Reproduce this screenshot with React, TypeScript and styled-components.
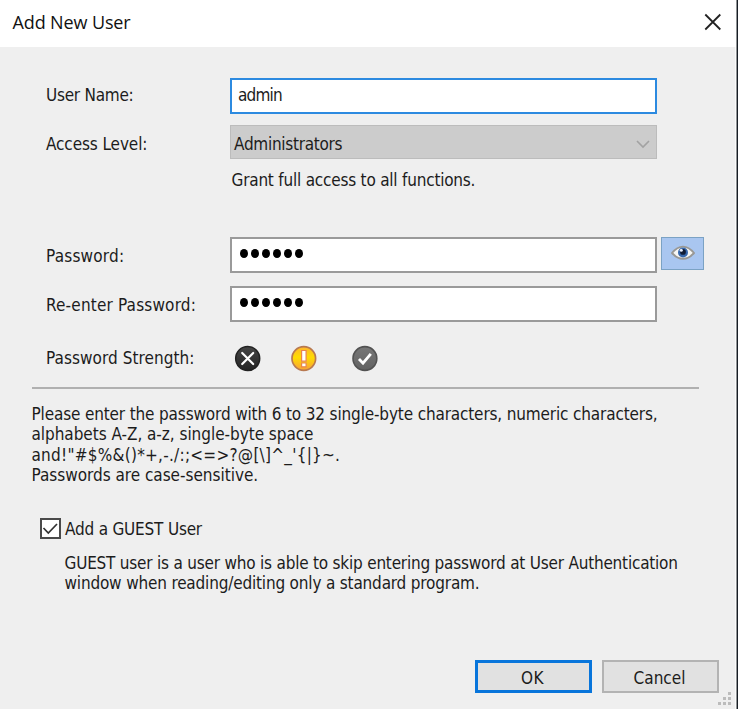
import React from 'react';
import styled, { createGlobalStyle } from 'styled-components';

const GlobalStyle = createGlobalStyle`
  * { box-sizing: border-box; }
  body { margin: 0; background: #efefef; }
`;

const Dialog = styled.div`
  width: 738px;
  height: 709px;
  display: flex;
  flex-direction: column;
  overflow: hidden;
  background: #efefef;
  border-right: 1px solid #171d24;
  box-shadow: inset -1px 0 0 #8f9294, inset -2px 0 0 #fafafa;
  color: #1c1c1c;
  font: 17px/20px "DejaVu Sans Condensed", "DejaVu Sans", sans-serif;
`;

const TitleBar = styled.header`
  height: 47px;
  flex: none;
  margin-right: 1px;
  display: flex;
  align-items: center;
  justify-content: space-between;
  padding: 0 14px 3px 12.5px;
  background: #fff;
`;

const Title = styled.h1`
  margin: 0;
  font: 400 18px/24px "Open Sans", sans-serif;
  letter-spacing: -0.12px;
  color: #111;
`;

const CloseButton = styled.button`
  display: flex;
  border: 0;
  padding: 0;
  background: none;
`;

const Text = styled.span<{ $track?: number }>`
  white-space: pre;
  letter-spacing: ${p => p.$track ?? 0}px;
`;

const Form = styled.main`
  display: flex;
  flex-direction: column;
  padding-top: 31px;
`;

const Row = styled.div<{ $height: number; $gap?: number }>`
  display: grid;
  grid-template-columns: 184px 427px auto;
  align-items: start;
  height: ${p => p.$height}px;
  margin: 0 0 ${p => p.$gap ?? 0}px 46px;
`;

const Label = styled.label<{ $top: number; $track: number }>`
  padding-top: ${p => p.$top}px;
  letter-spacing: ${p => p.$track}px;
  white-space: nowrap;
`;

const Field = styled.div<{ $focused?: boolean }>`
  height: 36px;
  display: flex;
  align-items: flex-start;
  padding: 5px 0 0 6px;
  background: #fff;
  border: 2px solid ${p => (p.$focused ? '#2c8ae0' : '#9a9a9a')};
`;

const Select = styled.div`
  height: 34px;
  display: flex;
  justify-content: space-between;
  align-items: center;
  padding: 3px 5px 0 3px;
  background: #ccc;
  border: 1px solid #bcbcbc;
`;

const Dots = styled.div`
  display: flex;
  gap: 3px;
  padding: 5px 0 0 2px;
`;

const Dot = styled.i`
  width: 8px;
  height: 9px;
  border-radius: 50%;
  background: #000;
`;

const EyeButton = styled.button`
  width: 43px;
  height: 33px;
  margin-left: 4px;
  padding: 0 0 1px;
  display: flex;
  align-items: center;
  justify-content: center;
  background: #a9c6f0;
  border: 1px solid #7ba2c4;
`;

const Hint = styled.div`
  height: 20px;
  margin: 11px 0 47px 231.5px;
  display: flex;
`;

const StrengthIcons = styled.div`
  display: grid;
  grid-template-columns: 56.5px 61px 28px;
  padding: 23px 0 0 3.5px;
`;

const Divider = styled.hr`
  width: 667px;
  height: 2px;
  margin: 0 0 0 32px;
  border: 0;
  background: #b0b0b0;
`;

const Rules = styled.div`
  display: flex;
  flex-direction: column;
  margin: 15px 0 0 31.5px;
  line-height: 20.4px;
`;

const CheckRow = styled.label`
  display: flex;
  align-items: center;
  gap: 4px;
  height: 22px;
  margin: 32px 0 0 40px;
`;

const CheckBox = styled.span`
  width: 21px;
  height: 21px;
  display: flex;
  background: #fff;
  border: 2px solid #4a4a4a;
`;

const GuestNote = styled.div`
  display: flex;
  flex-direction: column;
  margin: 13px 0 0 64.5px;
`;

const Footer = styled.footer`
  display: flex;
  justify-content: flex-end;
  align-items: flex-start;
  gap: 10px;
  margin-top: auto;
  height: 49px;
`;

const Button = styled.button<{ $primary?: boolean }>`
  width: 117px;
  height: 33px;
  padding: 3px 2px 0 0;
  display: flex;
  align-items: center;
  justify-content: center;
  color: inherit;
  font: inherit;
  background: #e1e1e1;
  border: ${p => (p.$primary ? '3px solid #0875db' : '2px solid #b3b3b3')};
`;

const Grip = styled.div`
  align-self: flex-end;
  width: 20px;
  height: 18px;
  margin-left: -12px;
`;

const PasswordDots = () => (
  <Dots>{[0, 1, 2, 3, 4, 5].map(i => <Dot key={i} />)}</Dots>
);

const EyeIcon = () => (
  <svg width="24" height="16" viewBox="0 0 24 16">
    <path d="M1 8C5 3 8 1.6 12 1.6S19 3 23 8C19 12.5 16 13.8 12 13.8S5 12.5 1 8Z" fill="#f7f7f5" stroke="#999895" strokeWidth="1.9" />
    <circle cx="12" cy="7.5" r="5" fill="#3768ad" />
    <circle cx="12" cy="6.9" r="2.9" fill="#111c35" />
    <circle cx="10.3" cy="5.2" r="1.5" fill="#e8f0ff" />
  </svg>
);

const WeakIcon = () => (
  <svg width="27" height="27" viewBox="0 0 27 27">
    <defs>
      <linearGradient id="weak" x2="0" y2="1"><stop stopColor="#454545" /><stop offset="1" stopColor="#242424" /></linearGradient>
    </defs>
    <circle cx="13.7" cy="13.5" r="12" fill="url(#weak)" stroke="#222" strokeWidth="1.5" />
    <path d="M8.2 8 19.2 19M19.2 8 8.2 19" stroke="#fff" strokeWidth="2.2" strokeLinecap="round" />
  </svg>
);

const MediumIcon = () => (
  <svg width="27" height="27" viewBox="0 0 27 27">
    <defs>
      <linearGradient id="medium" x2="0" y2="1"><stop stopColor="#ffb52e" /><stop offset=".45" stopColor="#ffdc00" /><stop offset="1" stopColor="#f9a03a" /></linearGradient>
    </defs>
    <circle cx="13.8" cy="13.5" r="11.8" fill="url(#medium)" stroke="#b87950" strokeWidth="1.7" />
    <path d="M11.6 5.5h4.5v10.7h-4.5zM11.6 18h4.5v3.8h-4.5z" fill="#fff" stroke="#e9864f" strokeWidth="1.2" />
  </svg>
);

const StrongIcon = () => (
  <svg width="27" height="27" viewBox="0 0 27 27">
    <defs>
      <linearGradient id="strong" x2="0" y2="1"><stop stopColor="#777" /><stop offset="1" stopColor="#626262" /></linearGradient>
    </defs>
    <circle cx="13.9" cy="13.5" r="11.9" fill="url(#strong)" stroke="#525252" strokeWidth="1.6" />
    <path d="m8 14 4 4.2 7.8-9.4" fill="none" stroke="#fff" strokeWidth="2.8" />
  </svg>
);

export default function App() {
  return (
    <>
      <GlobalStyle />
      <Dialog>
        <TitleBar>
          <Title>Add New User</Title>
          <CloseButton aria-label="Close">
            <svg width="18" height="18" viewBox="0 0 18 18">
              <path d="M1.3 1.5 16.3 16.5M16.3 1.5 1.3 16.5" stroke="#222" strokeWidth="1.8" />
            </svg>
          </CloseButton>
        </TitleBar>
        <Form>
          <Row $height={36} $gap={11}>
            <Label $top={7} $track={-0.25}>User Name:</Label>
            <Field $focused><Text $track={-0.8}>admin</Text></Field>
          </Row>
          <Row $height={34}>
            <Label $top={9} $track={-0.1}>Access Level:</Label>
            <Select>
              <Text $track={-0.28}>Administrators</Text>
              <svg width="16" height="12" viewBox="0 0 16 12">
                <path d="m2 3 6 6 6-6" fill="none" stroke="#a2a2a2" strokeWidth="1.6" />
              </svg>
            </Select>
          </Row>
          <Hint><Text $track={-0.21}>Grant full access to all functions.</Text></Hint>
          <Row $height={36} $gap={13}>
            <Label $top={9} $track={0.2}>Password:</Label>
            <Field><PasswordDots /></Field>
            <EyeButton aria-label="Show password"><EyeIcon /></EyeButton>
          </Row>
          <Row $height={36}>
            <Label $top={9} $track={0.17}>Re-enter Password:</Label>
            <Field><PasswordDots /></Field>
          </Row>
          <Row $height={65}>
            <Label $top={26} $track={0.06}>Password Strength:</Label>
            <StrengthIcons>
              <WeakIcon />
              <MediumIcon />
              <StrongIcon />
            </StrengthIcons>
          </Row>
          <Divider />
          <Rules>
            <Text $track={-0.15}>Please enter the password with 6 to 32 single-byte characters, numeric characters,</Text>
            <Text $track={-0.04}>alphabets A-Z, a-z, single-byte space</Text>
            <Text $track={0.25}>{'and!"#$%&()*+,-./:;<=>?@[\\]^_\'{|}~.'}</Text>
            <Text $track={-0.02}>Passwords are case-sensitive.</Text>
          </Rules>
          <CheckRow>
            <CheckBox>
              <svg width="17" height="17" viewBox="0 0 17 17">
                <path d="m1.5 8 4.8 5L15 4" fill="none" stroke="#333" strokeWidth="1.7" />
              </svg>
            </CheckBox>
            <Text $track={-0.2}>Add a GUEST User</Text>
          </CheckRow>
          <GuestNote>
            <Text $track={-0.21}>GUEST user is a user who is able to skip entering password at User Authentication</Text>
            <Text $track={-0.18}>window when reading/editing only a standard program.</Text>
          </GuestNote>
        </Form>
        <Footer>
          <Button $primary><Text $track={0.4}>OK</Text></Button>
          <Button><Text>Cancel</Text></Button>
          <Grip>
            <svg width="16" height="16" viewBox="0 0 16 16" fill="#bcbcbc">
              <path d="M11 1h3v3h-3zM6 6h3v3H6zM11 6h3v3h-3zM1 11h3v3H1zM6 11h3v3H6zM11 11h3v3h-3z" />
            </svg>
          </Grip>
        </Footer>
      </Dialog>
    </>
  );
}
